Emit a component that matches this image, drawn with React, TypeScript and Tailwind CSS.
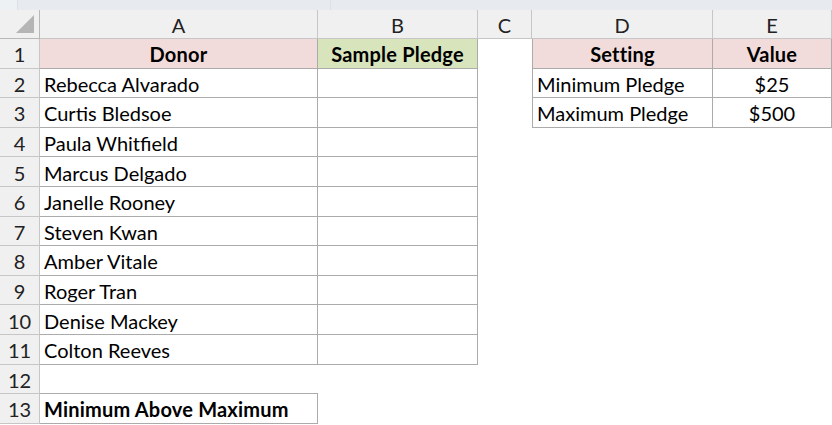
import React from 'react';

type CellProps = {
  text?: string;
  bg?: string;
  bold?: boolean;
  center?: boolean;
  edge?: string;
};

const donors = [
  'Rebecca Alvarado',
  'Curtis Bledsoe',
  'Paula Whitfield',
  'Marcus Delgado',
  'Janelle Rooney',
  'Steven Kwan',
  'Amber Vitale',
  'Roger Tran',
  'Denise Mackey',
  'Colton Reeves',
];

function Cell({ text = '', bg = 'bg-white', bold, center, edge = '' }: CellProps) {
  return (
    <div
      className={`h-[29.6px] flex items-center pt-[2px] px-[4px] overflow-hidden whitespace-nowrap text-black ${bg} ${
        bold ? 'font-bold tracking-[0.2px]' : ''
      } ${center ? 'justify-center' : ''} ${edge}`}
    >
      {text}
    </div>
  );
}

function RowHead({ n }: { n: number }) {
  return (
    <div className="h-[29.6px] flex items-center justify-center pt-[2px] bg-[#f0f0f0] border-r border-b border-[#c6c6c6] text-[#222]">
      {n}
    </div>
  );
}

export default function App() {
  const cols = ['A', 'B', 'C', 'D', 'E'];
  const box = 'border-r border-b border-[#ababab]';

  return (
    <div className="w-[832px] h-[425px] overflow-hidden bg-white text-[20px] leading-none font-['Lato',sans-serif]">
      {/* formula bar strip */}
      <div className="h-[10px] bg-[#eef1f4] flex">
        <div className="w-[17px]" />
        <div className="w-[313px] bg-[#e7ebef] border-l border-[#dde1e6]" />
        <div className="flex-1 bg-[#e7ebef] border-l border-[#dde1e6]" />
      </div>

      <div className="grid grid-cols-[40px_278px_160px_54px_181px_119px]">
        {/* column headers */}
        <div className="h-[29px] bg-[#f0f0f0] border-r border-b border-[#b8b8b8] relative">
          <div className="absolute right-[5px] bottom-[5px] w-0 h-0 border-l-[18px] border-l-transparent border-b-[18px] border-b-[#b5b5b5]" />
        </div>
        {cols.map((c) => (
          <div
            key={c}
            className="h-[29px] bg-[#f0f0f0] border-r border-b border-[#c6c6c6] flex items-center justify-center pt-[2px] text-[#222]"
          >
            {c}
          </div>
        ))}

        {/* row 1 */}
        <RowHead n={1} />
        <Cell text="Donor" bg="bg-[#f2dcdb]" bold center edge={box} />
        <Cell text="Sample Pledge" bg="bg-[#d8e4bc]" bold center edge={box} />
        <Cell />
        <Cell text="Setting" bg="bg-[#f2dcdb]" bold center edge={`${box} border-l`} />
        <Cell text="Value" bg="bg-[#f2dcdb]" bold center edge={box} />

        {donors.map((name, i) => (
          <React.Fragment key={name}>
            <RowHead n={i + 2} />
            <Cell text={name} edge={box} />
            <Cell edge={box} />
            <Cell />
            {i === 0 && <Cell text="Minimum Pledge" edge={`${box} border-l`} />}
            {i === 0 && <Cell text="$25" center edge={box} />}
            {i === 1 && <Cell text="Maximum Pledge" edge={`${box} border-l`} />}
            {i === 1 && <Cell text="$500" center edge={box} />}
            {i > 1 && <Cell />}
            {i > 1 && <Cell />}
          </React.Fragment>
        ))}

        {/* row 12 */}
        <RowHead n={12} />
        <Cell edge="border-b border-[#ababab]" />
        <Cell />
        <Cell />
        <Cell />
        <Cell />

        {/* row 13 */}
        <RowHead n={13} />
        <Cell text="Minimum Above Maximum" bold edge={box} />
        <Cell />
        <Cell />
        <Cell />
        <Cell />
      </div>
    </div>
  );
}
